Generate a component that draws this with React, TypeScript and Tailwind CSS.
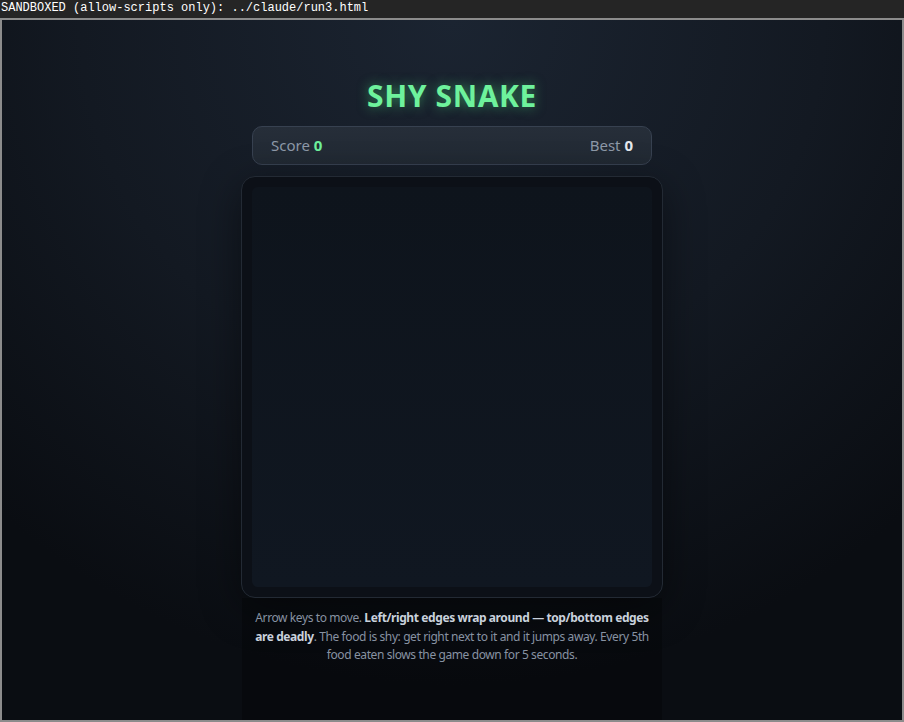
export default function App() {
  return (
    <div className="flex h-[722px] w-[904px] flex-col overflow-hidden bg-[#8c8c8c]">
      <div className="h-[18px] shrink-0 bg-[#252525] pl-px font-['Liberation_Mono',monospace] text-[12px] leading-[16px] text-white">
        SANDBOXED (allow-scripts only): ../claude/run3.html
      </div>
      <div className="mx-[2px] mb-[2px] mt-[2px] flex flex-1 flex-col items-center bg-[radial-gradient(ellipse_75%_95%_at_50%_0%,#1b2431_0%,#131922_55%,#0a0d12_100%)] font-['Noto_Sans',sans-serif]">
        <h1 className="mt-[57px] text-[30px] font-bold leading-[38px] tracking-[0.6px] text-[#6ef29c] [text-shadow:0_0_12px_rgba(74,222,128,0.55)]">
          SHY SNAKE
        </h1>
        <div className="mt-[11px] flex h-[39px] w-[400px] items-center justify-between rounded-[10px] border border-[#374150] bg-[linear-gradient(180deg,#262e39,#212933)] px-[18px] text-[15px] text-[#8e99a8]">
          <span>
            Score <span className="font-bold text-[#6ef29c]">0</span>
          </span>
          <span>
            Best <span className="font-bold text-[#e5e9ee]">0</span>
          </span>
        </div>
        <div className="mt-[11px] flex flex-1 flex-col items-center">
          <div className="h-[422px] w-[422px] rounded-[14px] border border-[#232a34] bg-[#0c1017] p-[10px] shadow-[0_10px_40px_rgba(0,0,0,0.45)]">
            <div className="h-full w-full rounded-[6px] bg-[linear-gradient(180deg,#0e141c,#101721)]" />
          </div>
          <div className="w-[420px] flex-1 bg-black/25 px-[10px] pt-[11px]">
            <p className="text-center text-[12px] leading-[18.5px] tracking-[-0.4px] text-[#8792a2]">
              Arrow keys to move.{" "}
              <b className="font-bold text-[#c9d1dc]">
                Left/right edges wrap around — top/bottom edges are deadly
              </b>
              . The food is shy: get right next to it and it jumps away. Every 5th food eaten slows the
              game down for 5 seconds.
            </p>
          </div>
        </div>
      </div>
    </div>
  );
}
